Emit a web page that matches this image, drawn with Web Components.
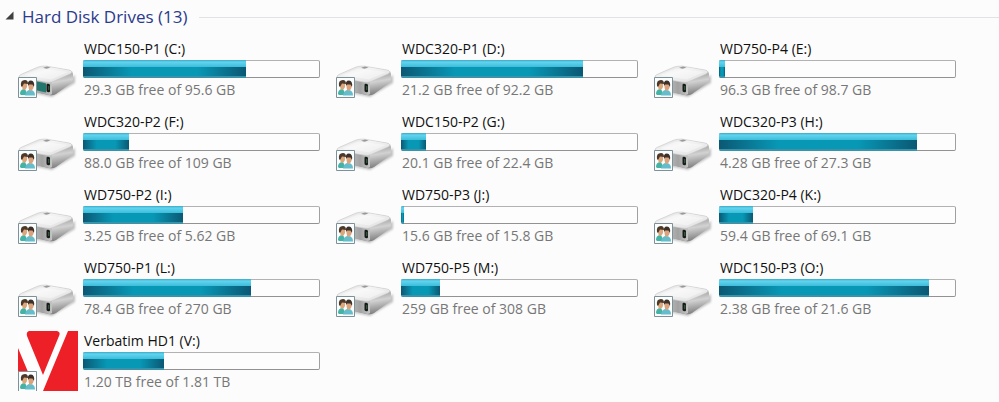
<!DOCTYPE html>
<html lang="en">
<head>
<meta charset="utf-8">
<title>Computer</title>
<style>
  body {
    margin: 0;
    background: #fcfcfc;
    font-family: "Open Sans", "Noto Sans", sans-serif;
  }
</style>
</head>
<body>
<drive-group label="Hard Disk Drives" count="13">
  <drive-tile name="WDC150-P1 (C:)" info="29.3 GB free of 95.6 GB" used="69" icon="system"></drive-tile>
  <drive-tile name="WDC320-P1 (D:)" info="21.2 GB free of 92.2 GB" used="77"></drive-tile>
  <drive-tile name="WD750-P4 (E:)" info="96.3 GB free of 98.7 GB" used="2"></drive-tile>
  <drive-tile name="WDC320-P2 (F:)" info="88.0 GB free of 109 GB" used="19"></drive-tile>
  <drive-tile name="WDC150-P2 (G:)" info="20.1 GB free of 22.4 GB" used="10"></drive-tile>
  <drive-tile name="WDC320-P3 (H:)" info="4.28 GB free of 27.3 GB" used="84"></drive-tile>
  <drive-tile name="WD750-P2 (I:)" info="3.25 GB free of 5.62 GB" used="42"></drive-tile>
  <drive-tile name="WD750-P3 (J:)" info="15.6 GB free of 15.8 GB" used="1"></drive-tile>
  <drive-tile name="WDC320-P4 (K:)" info="59.4 GB free of 69.1 GB" used="14"></drive-tile>
  <drive-tile name="WD750-P1 (L:)" info="78.4 GB free of 270 GB" used="71"></drive-tile>
  <drive-tile name="WD750-P5 (M:)" info="259 GB free of 308 GB" used="16"></drive-tile>
  <drive-tile name="WDC150-P3 (O:)" info="2.38 GB free of 21.6 GB" used="89"></drive-tile>
  <drive-tile name="Verbatim HD1 (V:)" info="1.20 TB free of 1.81 TB" used="34" icon="verbatim"></drive-tile>
</drive-group>

<template id="drive-group">
  <style>
    :host { display: block; }
    header {
      display: flex;
      align-items: center;
      height: 34px;
      padding-left: 5px;
    }
    svg { width: 9px; height: 9px; margin: 0 8px 4px 0; }
    h2 {
      margin: 0 12px 0 0;
      font-size: 17px;
      font-weight: 400;
      line-height: 24px;
      color: #2b3a8c;
    }
    .rule { flex: 1; height: 1px; background: #e0e2e6; }
    .tiles {
      display: grid;
      grid-template-columns: repeat(auto-fill, 302px);
      gap: 11px 16px;
      padding: 5px 0 9px 18px;
    }
  </style>
  <header>
    <svg viewBox="0 0 9 9" aria-hidden="true"><path d="M8.500 .5V8.500H.5Z" fill="#404040"/></svg>
    <h2></h2>
    <div class="rule"></div>
  </header>
  <div class="tiles"><slot></slot></div>
</template>

<template id="drive-tile">
  <style>
    :host {
      display: grid;
      grid-template-columns: 60px 1fr;
      column-gap: 5px;
      height: 62px;
      font-size: 14px;
      line-height: 20px;
      white-space: nowrap;
    }
    .name { color: #111; padding-left: 1px; }
    .info { color: #777; padding-left: 1px; }
    usage-bar { margin: 1px 0 2px; }
  </style>
  <drive-icon></drive-icon>
  <div>
    <div class="name"></div>
    <usage-bar></usage-bar>
    <div class="info"></div>
  </div>
</template>

<template id="usage-bar">
  <style>
    :host {
      display: block;
      box-sizing: border-box;
      height: 18px;
      border: 1px solid #a9a9a9;
      border-color: #b2b2b2 #a0a0a0 #929292 #b2b2b2;
      border-radius: 2px;
      background: #fdfdfd;
    }
    .fill {
      height: 18px;
      margin: -1px;
      border-radius: 2px 0 0 2px;
      background:
        linear-gradient(#3aa9c6 0, #62d4ef 2px, #3dbddb 7px, transparent 7px),
        linear-gradient(transparent 16px, #3a93a8 16px),
        linear-gradient(90deg, #0b5873, #0798b6 30%, #0798b6 70%, #0b5873);
    }
  </style>
  <div class="fill"></div>
</template>

<template id="drive-icon">
  <style>
    :host { display: block; width: 60px; height: 60px; }
    svg { display: block; width: 60px; height: 60px; }
    .drive, .verbatim, .port { display: none; }
    :host([kind="verbatim"]) .verbatim { display: inline; }
    :host(:not([kind="verbatim"])) .drive { display: inline; }
    :host([kind="system"]) .port { display: inline; }
    :host([kind="verbatim"]) .badge { transform: translateY(2px); }
  </style>
  <svg viewBox="0 0 60 60" aria-hidden="true">
    <defs>
      <linearGradient id="top" x1="0" y1="0" x2="1" y2="1">
        <stop offset="0" stop-color="#d6d6d6"/><stop offset=".4" stop-color="#f4f4f4"/><stop offset="1" stop-color="#dcdcdc"/>
      </linearGradient>
      <linearGradient id="side" x1=".3" y1="0" x2=".6" y2="1">
        <stop offset="0" stop-color="#ededed"/><stop offset=".45" stop-color="#b4b4b4"/><stop offset=".6" stop-color="#d2d2d2"/><stop offset="1" stop-color="#808080"/>
      </linearGradient>
      <linearGradient id="front" x1="0" x2="1">
        <stop offset="0" stop-color="#dedede"/><stop offset=".7" stop-color="#a2a2a2"/><stop offset="1" stop-color="#c4c4c4"/>
      </linearGradient>
      <filter id="soft"><feGaussianBlur stdDeviation="1.200"/></filter>
    </defs>
    <g class="drive">
      <path d="M10 53 34 58 57 44V36L36 50Z" fill="#777" opacity=".45" filter="url(#soft)"/>
      <path d="M1 38Q1 36 4 35L20 28Q23 27 28 27L51 31Q55 32 55 35V41Q55 43 52 45L38 55Q35 57 31 56L3 50Q1 49 1 47Z" fill="url(#side)"/>
      <path d="M1 38Q1 36 4 35L20 28Q23 27 28 27L51 31Q56 32 52 35L35 42.500Q32 44 28 43L3 39Z" fill="url(#top)" stroke="#c4c4c4" stroke-width=".5"/>
      <path d="M6 36 22 29.500 50 33 33 40.500Z" fill="#fff" opacity=".4"/>
      <path d="M1 39 28 43.500Q32 44 34 43V55Q32 56.500 29 55.500L1 49Z" fill="url(#front)"/>
      <path d="m25 28.800 4-1.200 3.500 .8-4 1.400Z" fill="#999"/>
      <path class="port" d="M17 42 28 44.500V53.500L17 51Z" fill="#23776c"/>
      <path d="M28.500 46Q28.500 44.500 30 44.700L31 45Q32 45.300 32 46.500V52Q32 53.500 30.500 53.200L29.500 53Q28.500 52.700 28.500 51.500Z" fill="#171c1a"/>
      <path d="M30.800 47V51" stroke="#4f8f58" stroke-width=".7"/>
    </g>
    <g class="verbatim">
      <path d="M0 0H60V60H0Z" fill="#ed2027"/>
      <path d="M0 0H11Q8 1 9 5L25 44 41 5Q43 1 39 0H50L25 60H18L0 17Z" fill="#fdfdfd"/>
    </g>
    <g class="badge">
      <path d="M.5 38.500H18.500V58.500H.5Z" fill="#fafeff" stroke="#7e9199"/>
      <path d="M2 55Q2 50 7 50L10 56H3Z" fill="#44b2a4"/>
      <path d="M7 56.500Q8 51 12 51 17 51 17 56.500Z" fill="#65bccb"/>
      <path d="M4 44H9L9 48Q8 51 6 51 4 50 4 47Z" fill="#dda77c"/>
      <path d="M3 47Q2 41 7 41 10 41 10 45L6 44.500 4 48Z" fill="#4d3829"/>
      <path d="M10.500 45H15.500V49Q14 52 12.500 52 10.500 51 10.500 48Z" fill="#dba27b"/>
      <path d="M10 47Q9 41.500 13 41.500 17 42 16 48L14.500 45.500 11 45.500Z" fill="#3c3029"/>
    </g>
  </svg>
</template>

<script>
  function attach(el, id) {
    const root = el.attachShadow({mode: 'open'});
    root.appendChild(document.getElementById(id).content.cloneNode(true));
    return root;
  }

  class DriveIcon extends HTMLElement {
    connectedCallback() {
      attach(this, 'drive-icon');
    }
  }

  class UsageBar extends HTMLElement {
    connectedCallback() {
      const root = attach(this, 'usage-bar');
      const used = this.getAttribute('value');
      this.setAttribute('role', 'meter');
      this.setAttribute('aria-valuenow', used);
      root.querySelector('.fill').style.width = `calc(${used}% + 1px)`;
    }
  }

  class DriveTile extends HTMLElement {
    connectedCallback() {
      const root = attach(this, 'drive-tile');
      root.querySelector('.name').textContent = this.getAttribute('name');
      root.querySelector('.info').textContent = this.getAttribute('info');
      root.querySelector('usage-bar').setAttribute('value', this.getAttribute('used'));
      root.querySelector('drive-icon').setAttribute('kind', this.getAttribute('icon') || 'drive');
    }
  }

  class DriveGroup extends HTMLElement {
    connectedCallback() {
      const root = attach(this, 'drive-group');
      root.querySelector('h2').textContent = `${this.getAttribute('label')} (${this.getAttribute('count')})`;
    }
  }

  // tiles fill in their children's attributes, so the inner elements come last
  customElements.define('drive-group', DriveGroup);
  customElements.define('drive-tile', DriveTile);
  customElements.define('usage-bar', UsageBar);
  customElements.define('drive-icon', DriveIcon);
</script>
</body>
</html>
